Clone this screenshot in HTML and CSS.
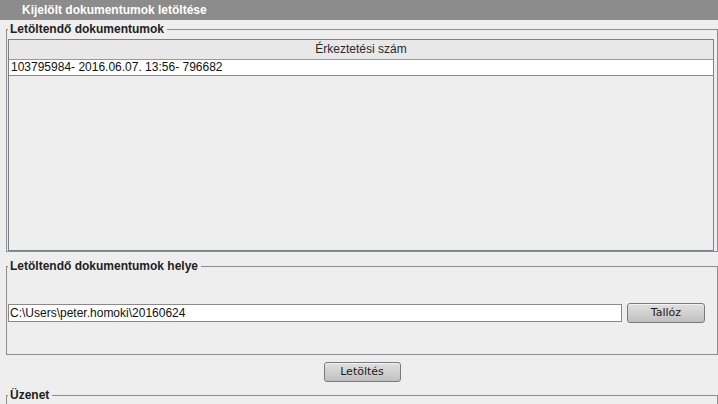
FILE: index.html
```html
<!DOCTYPE html>
<html lang="hu">
<head>
<meta charset="utf-8">
<title>Kijelölt dokumentumok letöltése</title>
<link rel="stylesheet" href="styles.css">
</head>
<body>
<div class="titlebar">Kijelölt dokumentumok letöltése</div>
<div class="content">
  <fieldset class="group group-docs">
    <legend>Letöltendő dokumentumok</legend>
    <div class="table">
      <div class="thead">Érkeztetési szám</div>
      <div class="row">103795984- 2016.06.07. 13:56- 796682</div>
    </div>
  </fieldset>
  <fieldset class="group group-path">
    <legend>Letöltendő dokumentumok helye</legend>
    <div class="path-row">
      <input class="path-input" type="text" value="C:\Users\peter.homoki\20160624">
      <button class="btn btn-browse" type="button">Tallóz</button>
    </div>
  </fieldset>
  <div class="action-row">
    <button class="btn btn-download" type="button">Letöltés</button>
  </div>
  <fieldset class="group group-msg">
    <legend>Üzenet</legend>
  </fieldset>
</div>
</body>
</html>
```
FILE: styles.css
```css
html, body {
  margin: 0;
  padding: 0;
}
body {
  width: 718px;
  height: 404px;
  overflow: hidden;
  background: #eeeeee;
  font-family: "Liberation Sans", Arial, sans-serif;
  font-size: 12px;
  color: #1e1e1e;
}
.titlebar {
  height: 20px;
  line-height: 20px;
  background: #8c8c8c;
  color: #ffffff;
  font-weight: bold;
  padding-left: 22px;
}
.content {
  padding-left: 6px;
}
.group {
  margin: 0;
  border: 1px solid #8d8d8d;
  min-width: 0;
}
.group legend {
  font-weight: bold;
  font-size: 12px;
  line-height: 14px;
  padding: 0 3px 0 2px;
  color: #1e1e1e;
}
.group-docs {
  margin-top: 2px;
  padding: 3px 3px 0 1px;
}
.table {
  height: 210px;
  border: 1px solid #7d8288;
  background: #eeeeee;
}
.thead {
  height: 19px;
  line-height: 19px;
  text-align: center;
  background: #e8e8e8;
  border-bottom: 1px solid #9a9a9a;
  color: #2a2a2a;
}
.row {
  height: 15px;
  line-height: 15px;
  background: #ffffff;
  border-bottom: 1px solid #8a8a8a;
  padding-left: 2px;
  color: #111;
}
.group-path {
  margin-top: 7px;
  padding: 30px 12px 31px 1px;
}
.path-row {
  display: flex;
  align-items: center;
  gap: 5px;
  height: 20px;
}
.path-input {
  box-sizing: border-box;
  width: 614px;
  height: 18px;
  margin: 0;
  border: 1px solid #8a8a8a;
  background: #ffffff;
  padding: 0 1px;
  font-family: "Liberation Sans", Arial, sans-serif;
  font-size: 12px;
  color: #111;
  outline: none;
}
.btn {
  box-sizing: border-box;
  height: 20px;
  margin: 0;
  padding: 0;
  border: 1px solid #7a7a7a;
  border-radius: 3px;
  background: linear-gradient(#e0e0e0, #d2d2d2 45%, #c0c0c0);
  box-shadow: inset 0 1px 0 #f2f2f2;
  font-family: "DejaVu Sans", Verdana, sans-serif;
  font-size: 11px;
  color: #1a1a1a;
  line-height: 18px;
}
.btn-browse {
  width: 78px;
}
.btn-download {
  width: 77px;
}
.action-row {
  display: flex;
  justify-content: center;
  margin-top: 7px;
}
.group-msg {
  margin-top: 6px;
  padding: 0 1px 20px 1px;
}
```
